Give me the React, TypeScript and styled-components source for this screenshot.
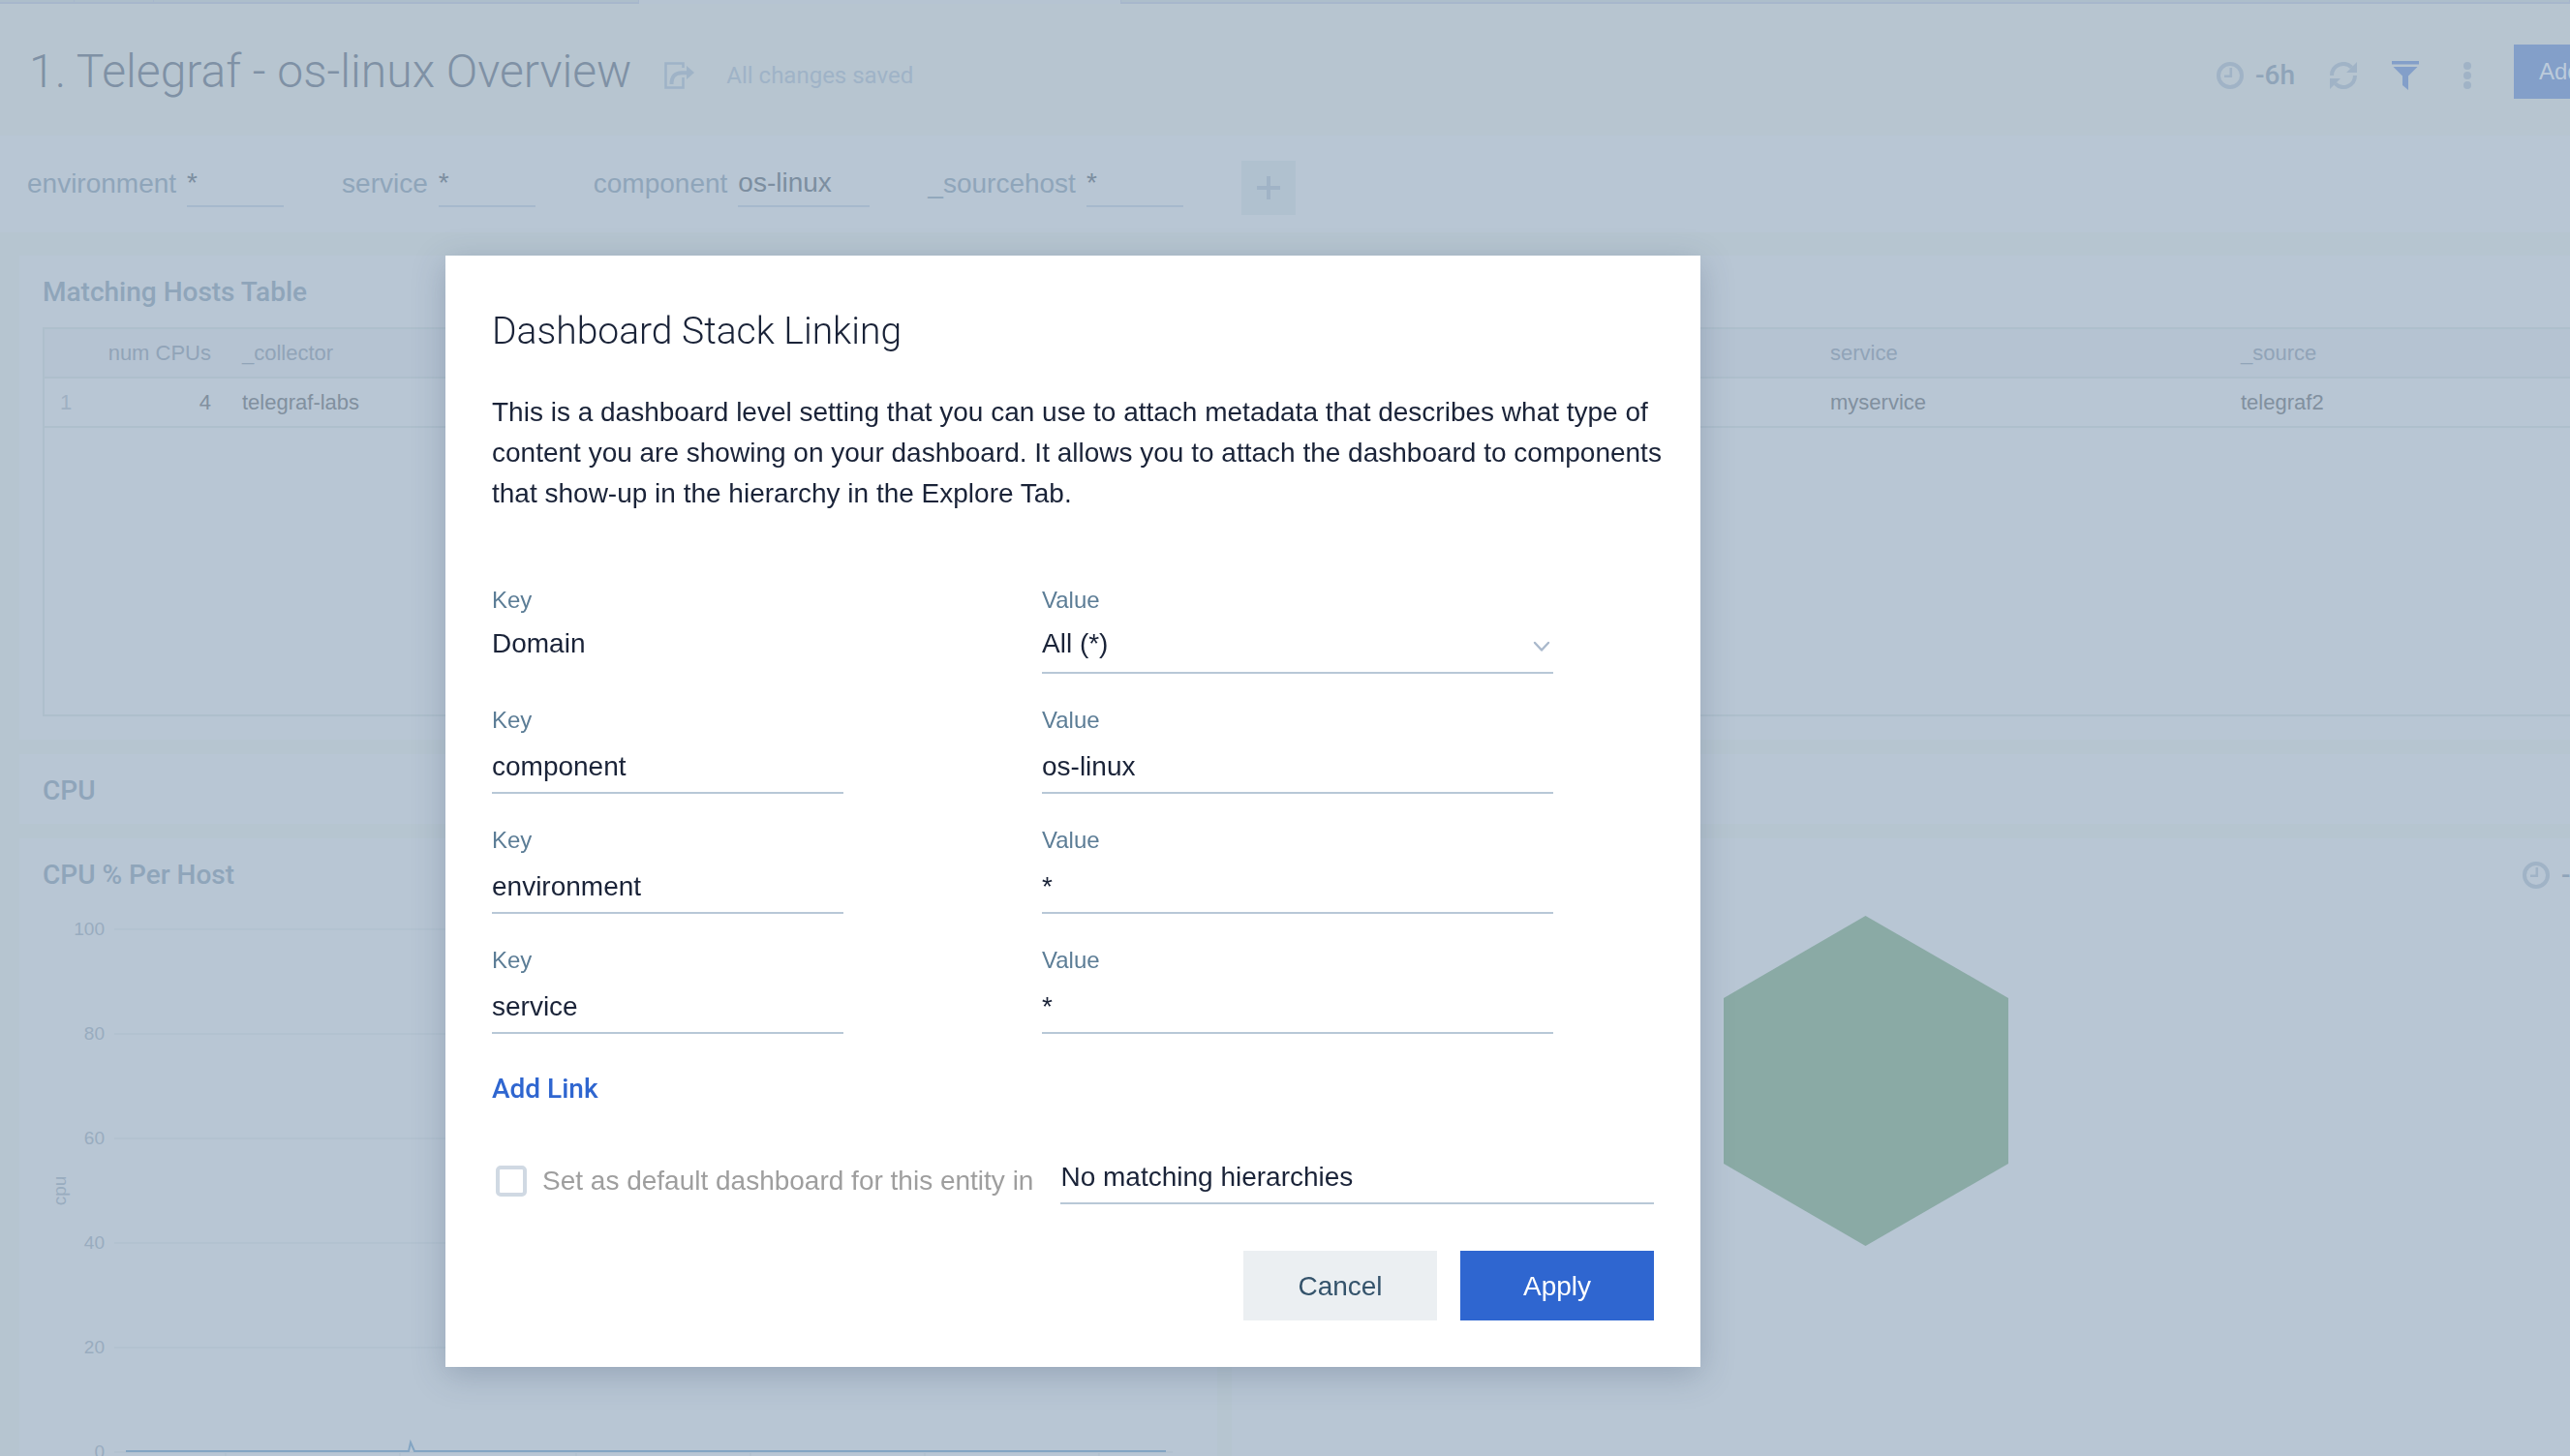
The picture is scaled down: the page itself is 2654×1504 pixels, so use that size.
import React from 'react';
import styled, { createGlobalStyle } from 'styled-components';

const sans = `'Liberation Sans', Arial, sans-serif`;
const roboto = `Roboto, 'Liberation Sans', sans-serif`;

const GlobalStyle = createGlobalStyle`
  *, *::before, *::after { box-sizing: border-box; }
  body { margin: 0; font-family: ${sans}; background: #b6c5d0; overflow: hidden; }
  h1, h2, p { margin: 0; }
  button, input, select { font-family: inherit; margin: 0; padding: 0; border: 0; border-radius: 0; background: none; outline: none; }
  svg { display: block; flex: none; }
`;

const Page = styled.div`
  height: 100vh;
  display: flex;
  flex-direction: column;
  overflow: hidden;
`;

/* ---------- tab strip ---------- */

const TabStrip = styled.nav`
  flex: none;
  display: flex;
  height: 4px;
`;

const TabEdge = styled.span<{ $width?: number; $active?: boolean }>`
  flex: ${(p) => (p.$width ? `0 0 ${p.$width}px` : '1')};
  background: ${(p) => (p.$active ? '#b6c4d2' : '#adbecb')};
  border-bottom: ${(p) => (p.$active ? '0' : '2px solid #a7b7cc')};
  border-right: 1px solid #a7b7cc;
`;

/* ---------- header ---------- */

const Header = styled.header`
  flex: none;
  height: 136px;
  padding: 4px 0 0 30px;
  display: flex;
  align-items: center;
  overflow: hidden;
  background: #b7c5d0;
`;

const Title = styled.h1`
  font: 300 48px/64px ${roboto};
  color: #7f91a5;
  white-space: nowrap;
`;

const HeaderStatus = styled.div`
  display: flex;
  align-items: center;
  gap: 32px;
  padding-top: 8px;
  margin-left: 34px;
  color: #9fb3c7;
  font: 24px/32px ${roboto};
`;

const Tools = styled.div`
  margin-left: auto;
  margin-right: 36px;
  padding-top: 8px;
  display: flex;
  align-items: center;
  gap: 36px;
`;

const IconButton = styled.button`
  display: flex;
  align-items: center;
  gap: 12px;
  color: #a0b3c6;
  font: 500 28px/32px ${roboto};
`;

const TimeText = styled.span`
  color: #8fa4b9;
`;

const AddPanelButton = styled.button`
  flex: none;
  width: 58px;
  height: 56px;
  padding-left: 26px;
  overflow: hidden;
  text-align: left;
  background: #839fc9;
  color: #bccbdb;
  font-size: 24px;
`;

/* ---------- filters ---------- */

const Filters = styled.section`
  flex: none;
  height: 100px;
  padding: 0 28px;
  display: flex;
  align-items: center;
  gap: 60px;
  background: #b8c6d4;
`;

const Filter = styled.label`
  display: flex;
  align-items: center;
  gap: 11px;
  color: #8fa5ba;
  font-size: 28px;
`;

const FilterInput = styled.input<{ $wide?: boolean }>`
  width: ${(p) => (p.$wide ? 136 : 100)}px;
  height: 48px;
  border-bottom: 2px solid #a6b9cd;
  color: #7c8ea0;
  font-size: 28px;
`;

const AddFilter = styled.button`
  width: 56px;
  height: 56px;
  margin-top: 8px;
  display: grid;
  place-items: center;
  background: #b0c1cf;
  color: #a0b3c6;
`;

/* ---------- panels ---------- */

const Board = styled.main`
  flex: 1;
  min-height: 0;
  padding: 24px 0 0 20px;
  display: flex;
  flex-direction: column;
  gap: 15px;
`;

const Panel = styled.section`
  flex: none;
  background: #b8c6d4;
`;

const PanelHead = styled.div`
  display: flex;
  align-items: center;
  justify-content: space-between;
  height: 72px;
  padding: 4px 0 0 24px;
`;

const PanelTitle = styled.h2`
  font: 500 28px/42px ${roboto};
  color: #8fa5ba;
`;

const PanelTime = styled(IconButton)`
  width: 49px;
  overflow: hidden;
`;

const TableBox = styled.div`
  height: 402px;
  margin: 2px 0 24px 24px;
  border: 2px solid #aebfcc;
  border-right: 0;
`;

const HostsTable = styled.table`
  width: 100%;
  table-layout: fixed;
  border-collapse: separate;
  border-spacing: 0;
  font-size: 22px;
`;

const Cell = styled.td<{ $muted?: boolean; $end?: boolean }>`
  height: 51px;
  padding: 0 16px;
  border-bottom: 2px solid #aebfcc;
  text-align: ${(p) => (p.$end ? 'right' : 'left')};
  font-weight: 400;
  color: ${(p) => (p.$muted ? '#9fb0c2' : '#81909f')};
`;

const HeadCell = styled(Cell)`
  background: #b5c3d2;
  color: #91a4b8;
`;

const PanelRow = styled.div`
  flex: 1;
  min-height: 0;
  display: grid;
  grid-template-columns: 1237fr 1382fr;
  gap: 15px;
`;

const ChartPanel = styled(Panel)`
  min-width: 0;
  overflow: hidden;
`;

const Chart = styled.svg`
  width: 100%;
  font-size: 19px;
  fill: #99acbf;
`;

/* ---------- dialog ---------- */

const Overlay = styled.div`
  position: fixed;
  inset: 0;
  padding: 264px 0 0 460px;
`;

const Dialog = styled.div`
  width: 1296px;
  max-width: 100%;
  padding: 48px;
  background: #fff;
  color: #1a2338;
  box-shadow: 0 8px 32px rgba(50, 70, 100, 0.26);
`;

const DialogTitle = styled.h2`
  font: 300 39px/60px ${roboto};
`;

const Description = styled.p`
  margin: 33px -12px 0 0;
  font-size: 28px;
  line-height: 42px;
`;

const Links = styled.div`
  margin-top: 73px;
  display: flex;
  flex-direction: column;
  gap: 32px;
`;

const LinkRow = styled.div`
  display: grid;
  grid-template-columns: 363px 528px;
  column-gap: 205px;
`;

const Field = styled.label`
  display: block;
  height: 92px;
`;

const FieldLabel = styled.span`
  display: block;
  font-size: 24px;
  line-height: 32px;
  color: #5c7d96;
`;

const FieldInput = styled.input`
  display: block;
  width: 100%;
  height: 60px;
  padding-top: 6px;
  border-bottom: 2px solid #b8c8d7;
  color: #1a2338;
  font-size: 28px;
`;

const FieldText = styled.span`
  display: block;
  font-size: 28px;
  line-height: 58px;
`;

const SelectWrap = styled.span`
  position: relative;
  display: block;

  svg {
    position: absolute;
    right: 3px;
    top: 26px;
  }
`;

const Select = styled.select`
  display: block;
  width: 100%;
  height: 60px;
  padding-bottom: 2px;
  appearance: none;
  border-bottom: 2px solid #b8c8d7;
  color: #1a2338;
  font-size: 28px;
`;

const AddLink = styled.button`
  display: block;
  margin-top: 36px;
  font: 500 28px/42px ${roboto};
  color: #2f66d0;
`;

const DefaultRow = styled.div`
  margin-top: 38px;
  padding-left: 4px;
  display: flex;
  align-items: flex-end;
  gap: 28px;
`;

const CheckLabel = styled.label`
  flex: none;
  display: flex;
  align-items: center;
  gap: 16px;
  height: 48px;
  color: #9e9e9e;
  font-size: 28px;
`;

const Checkbox = styled.input`
  width: 32px;
  height: 32px;
  appearance: none;
  border: 4px solid #d0d9e3;
  border-radius: 5px;
  background: #fff;
`;

const Hierarchy = styled(FieldInput)`
  flex: 1;
  min-width: 0;
`;

const Actions = styled.div`
  margin-top: 48px;
  display: flex;
  justify-content: flex-end;
  gap: 24px;
`;

const Action = styled.button<{ $primary?: boolean }>`
  width: 200px;
  height: 72px;
  padding-top: 2px;
  background: ${(p) => (p.$primary ? '#2f66d0' : '#ebeff2')};
  color: ${(p) => (p.$primary ? '#fff' : '#34536b')};
  font-size: 28px;
`;

/* ---------- icons ---------- */

const ShareIcon = () => (
  <svg width="32" height="28" viewBox="0 0 32 28" fill="none" stroke="currentColor">
    <path d="M19.5 6V1.5H1.5V26.5H19.5V16" strokeWidth="2.6" />
    <path d="M7.5 23C7.5 15 11 11.2 18 11.2H23" strokeWidth="4" />
    <path d="M23 4L31 11L23 18Z" fill="currentColor" stroke="none" />
  </svg>
);

const ClockIcon = () => (
  <svg width="28" height="28" viewBox="0 0 28 28" fill="none" stroke="currentColor">
    <circle cx="14" cy="14" r="12" strokeWidth="4" />
    <path d="M14.8 6V14.8H8" strokeWidth="2.6" />
  </svg>
);

const RefreshIcon = () => (
  <svg width="28" height="28" viewBox="0 0 28 28" fill="none" stroke="currentColor">
    <path d="M2 14A12 12 0 0 1 22.5 5.6" strokeWidth="4" />
    <path d="M26 14A12 12 0 0 1 5.5 22.4" strokeWidth="4" />
    <path d="M28 0V11H17ZM0 28V17H11Z" fill="currentColor" stroke="none" />
  </svg>
);

const FilterIcon = () => (
  <svg width="28" height="30" viewBox="0 0 28 30" fill="#839fc9">
    <path d="M0 0H28V3.5H0ZM1.5 6H26.5L17 15.5V30L11 25V15.5Z" />
  </svg>
);

const DotsIcon = () => (
  <svg width="26" height="28" viewBox="0 0 26 28" fill="currentColor">
    <circle cx="14" cy="4" r="4" />
    <circle cx="14" cy="14" r="4" />
    <circle cx="14" cy="24" r="4" />
  </svg>
);

const PlusIcon = () => (
  <svg width="24" height="24" viewBox="0 0 24 24" stroke="currentColor" strokeWidth="4">
    <path d="M12 0V24M0 12H24" />
  </svg>
);

const ChevronIcon = () => (
  <svg width="18" height="12" viewBox="0 0 18 12" fill="none" stroke="#aab9cc" strokeWidth="2.4">
    <path d="M2 2L9 9.5L16 2" strokeLinecap="round" strokeLinejoin="round" />
  </svg>
);

/* ---------- content ---------- */

const filters = [
  { name: 'environment', value: '*' },
  { name: 'service', value: '*' },
  { name: 'component', value: 'os-linux', wide: true },
  { name: '_sourcehost', value: '*' },
];

const links = [
  { key: 'component', value: 'os-linux' },
  { key: 'environment', value: '*' },
  { key: 'service', value: '*' },
];

const ticks = [100, 80, 60, 40, 20, 0];
const timeTicks = [213, 393, 575, 755, 935, 1115];

function CpuChart() {
  return (
    <Chart viewBox="0 0 1237 640" preserveAspectRatio="xMinYMin meet">
      {ticks.map((tick, i) => (
        <g key={tick}>
          <text x="88" y={28 + i * 108} textAnchor="end">{tick}</text>
          <path d={`M98 ${22 + i * 108}H1191`} stroke="#adbecc" />
        </g>
      ))}
      {timeTicks.map((x) => (
        <path key={x} d={`M${x} 563V580`} stroke="#adbecc" />
      ))}
      <text transform="translate(48 292) rotate(-90)" textAnchor="middle">cpu</text>
      <path d="M110 561H402L404 552L408 561H1184" fill="none" stroke="#83a5c3" strokeWidth="2" />
    </Chart>
  );
}

export default function App() {
  return (
    <>
      <GlobalStyle />
      <Page>
        <TabStrip>
          <TabEdge $width={77} />
          <TabEdge $width={82} />
          <TabEdge $width={501} />
          <TabEdge $width={498} $active />
          <TabEdge />
        </TabStrip>

        <Header>
          <Title>1. Telegraf - os-linux Overview</Title>
          <HeaderStatus>
            <ShareIcon />
            <span>All changes saved</span>
          </HeaderStatus>
          <Tools>
            <IconButton>
              <ClockIcon />
              <TimeText>-6h</TimeText>
            </IconButton>
            <IconButton aria-label="Refresh"><RefreshIcon /></IconButton>
            <IconButton aria-label="Filter"><FilterIcon /></IconButton>
            <IconButton aria-label="More"><DotsIcon /></IconButton>
          </Tools>
          <AddPanelButton>Add</AddPanelButton>
        </Header>

        <Filters>
          {filters.map((f) => (
            <Filter key={f.name}>
              {f.name}
              <FilterInput $wide={f.wide} defaultValue={f.value} />
            </Filter>
          ))}
          <AddFilter aria-label="Add filter"><PlusIcon /></AddFilter>
        </Filters>

        <Board>
          <Panel>
            <PanelHead><PanelTitle>Matching Hosts Table</PanelTitle></PanelHead>
            <TableBox>
              <HostsTable>
                <colgroup>
                  <col width="44" />
                  <col width="144" />
                  <col width="1640" />
                  <col width="424" />
                  <col />
                </colgroup>
                <thead>
                  <tr>
                    <HeadCell as="th" />
                    <HeadCell as="th" $end>num CPUs</HeadCell>
                    <HeadCell as="th">_collector</HeadCell>
                    <HeadCell as="th">service</HeadCell>
                    <HeadCell as="th">_source</HeadCell>
                  </tr>
                </thead>
                <tbody>
                  <tr>
                    <Cell $muted>1</Cell>
                    <Cell $end>4</Cell>
                    <Cell>telegraf-labs</Cell>
                    <Cell>myservice</Cell>
                    <Cell>telegraf2</Cell>
                  </tr>
                </tbody>
              </HostsTable>
            </TableBox>
          </Panel>

          <Panel>
            <PanelHead><PanelTitle>CPU</PanelTitle></PanelHead>
          </Panel>

          <PanelRow>
            <ChartPanel>
              <PanelHead><PanelTitle>CPU % Per Host</PanelTitle></PanelHead>
              <CpuChart />
            </ChartPanel>
            <ChartPanel>
              <PanelHead>
                <PanelTitle />
                <PanelTime>
                  <ClockIcon />
                  <TimeText>-6h</TimeText>
                </PanelTime>
              </PanelHead>
              <Chart viewBox="0 0 1382 640" preserveAspectRatio="xMinYMin meet">
                <path d="M654.5 8L802 93V264L654.5 349L508 264V93Z" fill="#8aaaa5" />
              </Chart>
            </ChartPanel>
          </PanelRow>
        </Board>
      </Page>

      <Overlay>
        <Dialog role="dialog" aria-labelledby="dialog-title">
          <DialogTitle id="dialog-title">Dashboard Stack Linking</DialogTitle>
          <Description>
            This is a dashboard level setting that you can use to attach metadata that describes what type of
            content you are showing on your dashboard. It allows you to attach the dashboard to components
            that show-up in the hierarchy in the Explore Tab.
          </Description>

          <Links>
            <LinkRow>
              <div>
                <FieldLabel>Key</FieldLabel>
                <FieldText>Domain</FieldText>
              </div>
              <Field>
                <FieldLabel>Value</FieldLabel>
                <SelectWrap>
                  <Select defaultValue="*">
                    <option value="*">All (*)</option>
                  </Select>
                  <ChevronIcon />
                </SelectWrap>
              </Field>
            </LinkRow>
            {links.map((link) => (
              <LinkRow key={link.key}>
                <Field>
                  <FieldLabel>Key</FieldLabel>
                  <FieldInput defaultValue={link.key} />
                </Field>
                <Field>
                  <FieldLabel>Value</FieldLabel>
                  <FieldInput defaultValue={link.value} />
                </Field>
              </LinkRow>
            ))}
          </Links>

          <AddLink>Add Link</AddLink>

          <DefaultRow>
            <CheckLabel>
              <Checkbox type="checkbox" />
              Set as default dashboard for this entity in
            </CheckLabel>
            <Hierarchy aria-label="Hierarchy" defaultValue="No matching hierarchies" />
          </DefaultRow>

          <Actions>
            <Action>Cancel</Action>
            <Action $primary>Apply</Action>
          </Actions>
        </Dialog>
      </Overlay>
    </>
  );
}
